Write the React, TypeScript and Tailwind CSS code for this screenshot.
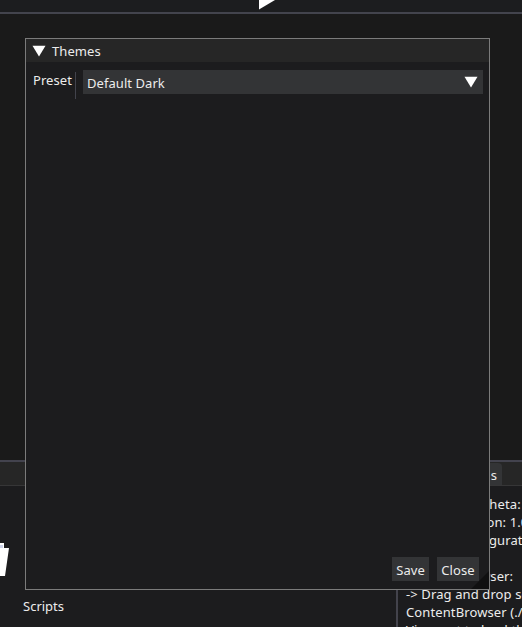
const consoleLines = [
  { text: 'Theta:', offset: 'pl-[76px]' },
  { text: 'ion: 1.0.0', offset: 'pl-[77px]' },
  { text: 'guration:', offset: 'pl-[83px]' },
  { text: '', offset: '' },
  { text: 'wser:', offset: 'pl-[74px]' },
  { text: '-> Drag and drop scripts', offset: '' },
  { text: 'ContentBrowser (./', offset: '' },
  { text: 'Viewport to load them', offset: '' },
];

function DownArrow() {
  return (
    <svg width="14" height="12" viewBox="0 0 14 12">
      <path d="M0.5 0.8H13.5L7 11.5Z" fill="#fff" />
    </svg>
  );
}

function ThemesDialog() {
  return (
    <section className="absolute left-[25px] top-[38px] flex h-[552px] w-[465px] flex-col border border-[#7b7b7b] bg-[#1c1c1e]">
      <header className="flex h-[23px] shrink-0 items-center bg-[#262626] pl-[6px]">
        <DownArrow />
        <span className="ml-[6px] leading-[18px]">Themes</span>
      </header>
      <div className="flex pl-[7px] pr-[6px] pt-2">
        <span className="mt-px w-[42px] leading-[18px]">Preset</span>
        <div className="mt-[2px] h-[27px] w-px bg-[#42434c]" />
        <div className="ml-[7px] flex h-6 flex-1 items-center justify-between bg-[#333436] pl-1 pr-[5px]">
          <span className="mt-px leading-[18px]">Default Dark</span>
          <DownArrow />
        </div>
      </div>
      <footer className="mt-auto flex justify-end gap-2 pb-2 pr-[10px]">
        <button className="h-6 w-[37px] bg-[#333436] pt-[2px] leading-[18px]">Save</button>
        <button className="h-6 w-[42px] bg-[#333436] pt-[2px] leading-[18px]">Close</button>
      </footer>
      <svg className="absolute bottom-0 right-0" width="18" height="18">
        <path d="M18 0V18H0Z" fill="#101011" />
      </svg>
    </section>
  );
}

export default function App() {
  return (
    <main className="relative flex h-[627px] w-[522px] flex-col overflow-hidden bg-[#1a1a1a] font-['Noto_Sans','Open_Sans',sans-serif] text-[13px] tracking-[0.06px] text-[#ececec]">
      <div className="h-[14px] shrink-0 border-b-2 border-[#43444d] bg-[#1c1d1f] pl-[259px]">
        <svg width="17" height="11">
          <path d="M0 -9L16 0L0 9.5Z" fill="#fff" />
        </svg>
      </div>
      <div className="h-[446px] shrink-0" />
      <div className="flex h-[26px] shrink-0 justify-end border-b border-t-2 border-b-[#363637] border-t-[#43434e] bg-[#262626] pr-5 pt-px">
        <div className="w-14 rounded-t bg-[#333436] pr-[5px] pt-[3px] text-right leading-[18px]">s</div>
      </div>
      <div className="flex flex-1 bg-[#1c1c1e]">
        <div className="w-[396px] shrink-0">
          <svg className="mt-[57px] block" width="10" height="34">
            <path d="M0 0H4V5H9L5 33H0Z" fill="#fff" />
            <path d="M0 2H3V5H0Z" fill="#cdd3ea" />
          </svg>
          <p className="ml-[23px] mt-[20px] leading-[18px] tracking-normal">Scripts</p>
        </div>
        <div className="w-[2px] shrink-0 bg-[#43434c]" />
        <div className="h-[141px] flex-1 overflow-hidden pl-2 pt-[9px] tracking-[0.11px]">
          {consoleLines.map((line, index) => (
            <p key={index} className={`h-[18px] whitespace-nowrap leading-[18px] ${line.offset}`}>
              {line.text}
            </p>
          ))}
        </div>
      </div>
      <ThemesDialog />
    </main>
  );
}
